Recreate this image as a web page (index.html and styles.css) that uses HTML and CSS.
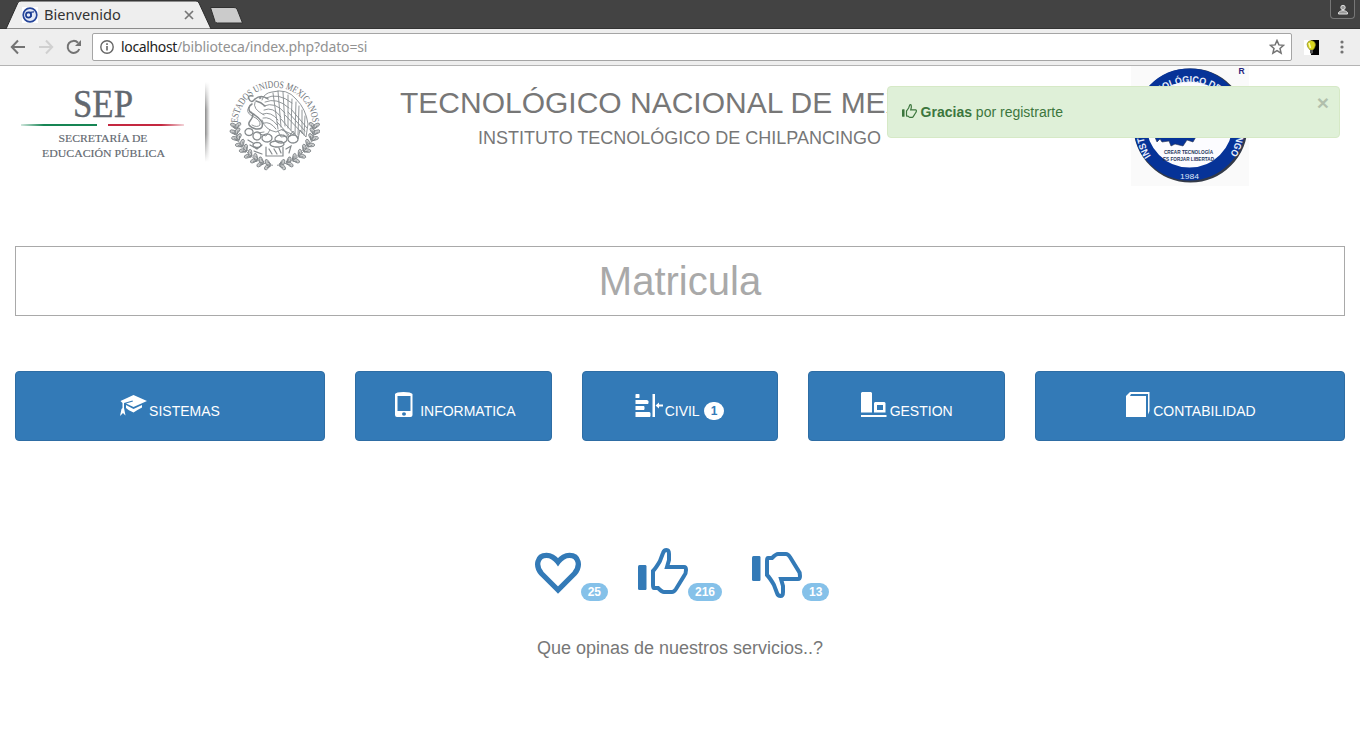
FILE: index.html
```html
<!DOCTYPE html>
<html lang="es">
<head>
<meta charset="utf-8">
<title>Bienvenido</title>
<link rel="stylesheet" href="styles.css">
</head>
<body>
<div class="tabstrip">
  <svg class="tab-shape" width="250" height="29" viewBox="0 0 250 29">
    <path d="M6 29 L18 2.500 Q19 1 21 1 H196 Q198 1 199 3 L211 29Z" fill="#eee" stroke="#2b2b2b"/>
    <path d="M210.500 7.500H234Q236 7.500 237 9L242.500 23H217.500Q215.500 23 215 21.500Z" fill="#cbcbcb" stroke="#303030"/>
  </svg>
  <div class="tab">
    <svg width="16" height="16" viewBox="0 0 16 16"><rect width="16" height="16" fill="#fff"/><circle cx="8" cy="8" r="6.800" fill="#e4e9f6" stroke="#25459a" stroke-width="1.700"/><circle cx="6.500" cy="8" r="2.600" fill="none" stroke="#183a91" stroke-width="1.600"/><path d="M6 5.500L12 4.800M9 5.500V10" stroke="#183a91" stroke-width="1.200"/></svg>
    <span class="tab-title">Bienvenido</span>
    <svg width="10" height="10" viewBox="0 0 10 10"><path d="M1 1L9 9M9 1L1 9" stroke="#777" stroke-width="1.700"/></svg>
  </div>
  <div class="profile"><svg width="12" height="12" viewBox="0 0 12 12"><circle cx="6" cy="3.500" r="2.200" fill="#999" stroke="#ddd"/><path d="M1.500 10V8.500Q3.500 6.500 6 6.500T10.500 8.500V10Z" fill="#999" stroke="#ddd"/></svg></div>
</div>
<div class="toolbar">
  <svg class="nav" width="84" height="36" viewBox="0 0 84 36" fill="none" stroke-width="2">
    <path d="M25 18H12M18 11.500L11.800 18L18 24.500" stroke="#737373"/>
    <path d="M39 18H52M46 11.500L52.200 18L46 24.500" stroke="#d0d0d0"/>
    <path d="M79.300 20A6 6 0 1 1 78 13.700" stroke="#737373"/><path d="M81 11V17H75Z" fill="#737373"/>
  </svg>
  <div class="omnibox">
    <svg width="14" height="14" viewBox="0 0 14 14"><circle cx="7" cy="7" r="6.200" fill="none" stroke="#666" stroke-width="1.400"/><path d="M7 6V10.500M7 3.300V5" stroke="#666" stroke-width="1.600"/></svg>
    <span class="url"><b>localhost</b>/biblioteca/index.php?dato=si</span>
    <svg class="star" width="16" height="16" viewBox="0 0 16 16"><path d="M8 1.500L9.900 5.900L14.600 6.300L11 9.400L12.100 14.100L8 11.600L3.900 14.100L5 9.400L1.400 6.300L6.100 5.900Z" fill="none" stroke="#737373" stroke-width="1.500"/></svg>
  </div>
  <svg class="bulb" width="15" height="15" viewBox="0 0 15 15"><path d="M0 0H7V15H0Z" fill="#fff"/><path d="M7 0H15V15H7Z" fill="#000"/><path d="M3 4Q4 .500 7.500.500Q11.500 1 11.500 5Q11 8 9 10H6Q3 7 3 4Z" fill="#d8d51e" stroke="#77751d" stroke-width=".6"/><path d="M5 3L6.500 8" stroke="#ffffb0" stroke-width="1.500"/><path d="M6 10H9V13L7.500 14L6 13Z" fill="#555"/></svg>
  <svg class="menu" width="4" height="14" viewBox="0 0 4 14" fill="#737373"><circle cx="2" cy="2" r="1.600"/><circle cx="2" cy="7" r="1.600"/><circle cx="2" cy="12" r="1.600"/></svg>
</div>

<div class="page">
  <header class="header">
    <svg class="gov" width="320" height="114" viewBox="0 66 320 114">
      <defs>
        <linearGradient id="green"><stop stop-color="#168554" stop-opacity=".2"/><stop offset=".3" stop-color="#168554"/></linearGradient>
        <linearGradient id="red"><stop offset=".7" stop-color="#c42840"/><stop offset="1" stop-color="#c42840" stop-opacity=".2"/></linearGradient>
        <linearGradient id="shade"><stop stop-color="#888"/><stop offset="1" stop-color="#fff"/></linearGradient>
        <linearGradient id="fade" x2="0" y2="1"><stop stop-color="#fff"/><stop offset=".35" stop-color="#fff" stop-opacity="0"/><stop offset=".65" stop-color="#fff" stop-opacity="0"/><stop offset="1" stop-color="#fff"/></linearGradient>
        <path id="motto" d="M237.500 125A37.500 37.500 0 0 1 312.500 125"/>
        <g id="leaf"><ellipse cx="-3" cy="-1" rx="3.800" ry="1.800" transform="rotate(35)"/><ellipse cx="3" cy="-1" rx="3.800" ry="1.800" transform="rotate(-35)"/><path d="M0-3V3M-3-3L-1 1M3-3L1 1"/></g>
      </defs>
      <g fill="#626870" stroke="#626870" font-family="Liberation Serif, serif">
        <text x="73" y="116.500" font-size="39" stroke-width=".4" textLength="60" lengthAdjust="spacingAndGlyphs">SEP</text>
        <text x="58.500" y="142" font-size="11.300" stroke-width=".15" textLength="89" lengthAdjust="spacingAndGlyphs">SECRETARÍA DE</text>
        <text x="42" y="157" font-size="11.300" stroke-width=".15" textLength="123" lengthAdjust="spacingAndGlyphs">EDUCACIÓN PÚBLICA</text>
      </g>
      <rect x="21" y="124" width="76" height="2" fill="url(#green)"/>
      <rect x="108" y="124" width="76" height="2" fill="url(#red)"/>
      <rect x="205" y="82" width="5" height="80" fill="url(#shade)"/><rect x="205" y="82" width="6" height="80" fill="url(#fade)"/>
      <text font-family="Liberation Serif, serif" font-size="10" fill="#6d7276"><textPath href="#motto" startOffset="2" textLength="113" lengthAdjust="spacingAndGlyphs">ESTADOS UNIDOS MEXICANOS</textPath></text>
      <g fill="none" stroke="#858a8d" stroke-width=".9" stroke-linecap="round">
        <path d="M262 100Q264 93 272 92Q287 88 296 99Q306 109 308 124L306 137L300 130L298 139L293 131L289 137L283 129L276 132Q265 130 262 120"/>
        <path d="M266 98Q278 92 292 103M265 102Q277 97 289 108M264 106Q275 101 285 113M264 110Q273 106 281 117M263 114Q271 111 278 120M263 118Q270 116 277 125M264 123Q270 121 276 129"/>
        <path d="M273 93L278 129M278 91L281 127M283 92L285 126M288 95L288 128M292 99L291 130M296 102L295 134M299 106L298 135M302 110L302 133M305 116L304 135"/>
        <path d="M285 115L303 134M288 112L305 131M291 109L307 128M281 119L294 134M277 122L289 135"/>
        <path stroke-width="1.500" d="M268 99Q261 94 255 99Q251 104 249 99Q247 95 253 96M256 101Q261 102 265 106"/>
        <circle cx="260" cy="98" r=".8"/>
        <path stroke-width="1.500" d="M252 104Q247 107 250 112Q258 116 262 122Q264 130 256 129Q246 126 250 121Q255 115 251 112"/>
        <path d="M249 107Q245 112 252 116Q261 120 260 125Q257 128 252 125M255 102Q252 109 264 115M270 130L266 136L260 134M278 131L281 137L288 136M264 132L258 133M282 130L294 135"/>
        <g stroke-width="1.300" stroke-dasharray="2 .8"><ellipse cx="249" cy="132" rx="4" ry="3.500"/><ellipse cx="257" cy="136" rx="4" ry="4"/><ellipse cx="267" cy="138" rx="5" ry="4"/><ellipse cx="281" cy="139" rx="6" ry="4"/><ellipse cx="293" cy="139" rx="5" ry="4"/><ellipse cx="277" cy="144" rx="7" ry="3"/><ellipse cx="257" cy="145" rx="4" ry="2.500"/></g>
        <path stroke-width="1.200" d="M266 147V156H283V147M269 149L272 154M274 149L277 154M279 148L281 153M248 140L253 143M250 145L257 149L262 145M286 149L291 146L289 153M254 151L262 154"/>
      </g>
      <g fill="#c9cbcc" stroke="#7c8185" stroke-width=".8">
        <use href="#leaf" transform="translate(236 128) rotate(-5)"/><use href="#leaf" transform="translate(236 134) rotate(-15)"/><use href="#leaf" transform="translate(238 140) rotate(-24)"/><use href="#leaf" transform="translate(242 146) rotate(-35)"/><use href="#leaf" transform="translate(246 151) rotate(-44)"/><use href="#leaf" transform="translate(251 156) rotate(-54)"/><use href="#leaf" transform="translate(257 160) rotate(-63)"/><use href="#leaf" transform="translate(263 163) rotate(-74)"/><use href="#leaf" transform="translate(270 165) rotate(-85)"/>
        <use href="#leaf" transform="translate(314 128) rotate(5)"/><use href="#leaf" transform="translate(314 134) rotate(15)"/><use href="#leaf" transform="translate(312 140) rotate(24)"/><use href="#leaf" transform="translate(308 146) rotate(35)"/><use href="#leaf" transform="translate(304 151) rotate(44)"/><use href="#leaf" transform="translate(299 156) rotate(54)"/><use href="#leaf" transform="translate(293 160) rotate(63)"/><use href="#leaf" transform="translate(287 163) rotate(74)"/><use href="#leaf" transform="translate(280 165) rotate(85)"/>
      </g>
    </svg>
    <div class="titles">
      <h2>TECNOLÓGICO NACIONAL DE MEXICO</h2>
      <h4>INSTITUTO TECNOLÓGICO DE CHILPANCINGO</h4>
    </div>
    <svg class="school" width="118" height="120" viewBox="1131 66 118 120">
      <defs><path id="ring" d="M1151 156A47 47 0 1 1 1229 156"/></defs>
      <rect x="1131" y="66" width="118" height="120" fill="#fafafa"/>
      <circle cx="1190.500" cy="125.500" r="50" fill="none" stroke="#333a48" stroke-width="14"/>
      <circle cx="1189.500" cy="124.500" r="49.500" fill="#fcfcff" stroke="#063398" stroke-width="13"/>
      <path d="M1154 135H1197L1193 142L1187 140L1183 146L1175 144L1171 146L1169 141L1162 142L1160 139L1157 142Z" fill="#063398" stroke="#26334f" stroke-width=".6"/>
      <g font-family="Liberation Sans, sans-serif" font-weight="bold">
        <g font-size="9.800" fill="#e9effc">
          <text><textPath href="#ring" startOffset="0" textLength="47" lengthAdjust="spacingAndGlyphs">INSTITUTO</textPath></text>
          <text><textPath href="#ring" startOffset="50" textLength="82" lengthAdjust="spacingAndGlyphs">TECNOLÓGICO DE</textPath></text>
          <text><textPath href="#ring" startOffset="135" textLength="66" lengthAdjust="spacingAndGlyphs">CHILPANCINGO</textPath></text>
        </g>
        <text x="1180" y="178.500" font-size="8" font-weight="400" fill="#dfe6f8" textLength="19" lengthAdjust="spacingAndGlyphs">1984</text>
        <g font-size="5.500" fill="#26365c"><text x="1164" y="154.300" textLength="49" lengthAdjust="spacingAndGlyphs">CREAR TECNOLOGÍA</text><text x="1163" y="160.800" textLength="51" lengthAdjust="spacingAndGlyphs">ES FORJAR LIBERTAD</text></g>
        <text x="1238.500" y="74" font-size="8.500" fill="#27247c">R</text>
      </g>
    </svg>
  </header>

  <div class="alert">
    <svg width="15" height="14" viewBox="0 0 50 46"><use href="#thumb"/></svg>
    <span><strong>Gracias</strong> por registrarte</span>
    <span class="close">×</span>
  </div>

  <input class="matricula" type="text" placeholder="Matricula">

  <div class="careers">
    <div class="col wide"><a class="btn"><svg class="icon" viewBox="0 0 28 28"><path d="M13.500 4L27 10L13.500 16L6 12.500L13 10.500L12.500 9.500L4 12V17L5.500 24.500L3 22L0 25L1.500 18L2.500 17V12L.500 10Z"/><path d="M6 14L13.500 18L22 14V16.500Q19 18 13.500 21.500Q8 19 6 17Z"/></svg>SISTEMAS</a></div>
    <div class="col"><a class="btn"><svg class="icon" viewBox="0 0 28 28"><path fill-rule="evenodd" d="M3 3Q4 1 11.500 1T20.500 3V24Q20.500 26 18.500 26H5Q3 26 3 24ZM5.500 5V20H18.500V5ZM10 23A2 1.800 0 1 0 14 23A2 1.800 0 1 0 10 23"/></svg>INFORMATICA</a></div>
    <div class="col"><a class="btn"><svg class="icon" viewBox="1 0 28 28"><path d="M-.500 3.500L0 3H3L3.500 3.500V6.500L3 7H-.500ZM-.500 9H11L12.500 10V12L12 13H-.500ZM-.500 15H8L8.500 16V18L8 19H-.500ZM-.500 21H13.500L14.500 22V25L14 26H-.500ZM16.500 3H19V26H16.500ZM19.500 14.500L23 11.500V13.500H27V15.500H23V17.500Z"/></svg>CIVIL<span class="count">1</span></a></div>
    <div class="col"><a class="btn"><svg class="icon" viewBox="1 0 28 28"><path fill-rule="evenodd" d="M0 2L1 1H10L11 2V21.500H0ZM13 12L14 11H23.500L24.500 12V21.500H13ZM16 14V19H22V14ZM0 24H25.500V26H0Z"/></svg>GESTION</a></div>
    <div class="col wide"><a class="btn"><svg class="icon" viewBox="-1 0 28 28"><path d="M0 5L4 1H23.500V20L22 23.500V3H5L4 5H20V26H0Z"/></svg>CONTABILIDAD</a></div>
  </div>

  <div class="ratings">
    <div class="rate"><svg width="50" height="46" viewBox="0 0 50 46"><path d="M27 42L10.500 25.500C4 18 6 7.300 15.500 7.300C21 7.300 24 10 27 14C30 10 33 7.300 38.500 7.300C48 7.300 50 18 43.500 25.500Z" fill="none" stroke="#337ab7" stroke-width="5.300"/></svg><span class="badge">25</span></div>
    <div class="rate"><svg width="50" height="46" viewBox="0 0 50 46"><g id="thumb"><path d="M1.500 17H7.500Q8.500 17 8.500 18.500V40.500Q8.500 42 7.500 42H1.500Q0 42 0 40.500V18.500Q0 17 1.500 17Z" fill="currentColor"/><path d="M15 23Q18 20 22 13L25 5Q26 2 28.500 2Q31 2 31 6V12L29 19H46Q48 19 48 22Q48 26 46 28L38 41Q36 44 34 44H26Q24 44 20 40H16Q15 40 15 37Z" fill="none" stroke="currentColor" stroke-width="4"/></g></svg><span class="badge">216</span></div>
    <div class="rate down"><svg width="50" height="46" viewBox="0 0 50 46"><use href="#thumb" transform="matrix(1 0 0 -1 0 46)"/></svg><span class="badge">13</span></div>
  </div>
  <p class="question">Que opinas de nuestros servicios..?</p>
</div>
</body>
</html>
```

FILE: styles.css
```css
* { box-sizing: border-box; }
body { margin: 0; height: 744px; overflow: hidden; background: #fff; font: 14px/20px "Liberation Sans", Arial, sans-serif; color: #777; }
svg { display: block; flex: none; }
.tabstrip { position: relative; height: 29px; background: #434343; border-bottom: 1px solid #333; display: flex; justify-content: space-between; }
.tab-shape { position: absolute; left: 0; top: 0; }
.tab { position: relative; display: flex; align-items: center; width: 194px; padding: 1px 0 0 22px; font: 14.6px/20px "Noto Sans", sans-serif; color: #333; }
.tab-title { flex: 1; padding-left: 6px; margin-top: -2px; }
.profile { width: 25px; height: 19px; margin-right: 5px; border: 1px solid #777; border-top: 0; border-radius: 0 0 4px 4px; background: #3d3d3d; display: flex; justify-content: center; padding-top: 4px; }
.toolbar { height: 37px; background: #eee; border-bottom: 1px solid #b4b4b4; display: flex; align-items: center; }
.omnibox { margin-left: 8px; width: 1200px; height: 28px; border: 1px solid #a5a5a5; border-radius: 2px; background: #fff; display: flex; align-items: center; padding: 0 6px 0 7px; }
.url { flex: 1; padding-left: 7px; font: 14px/20px "Noto Sans", sans-serif; color: #929292; letter-spacing: -.14px; }
.url b { font-weight: 400; color: #222; letter-spacing: -.35px; }
.bulb { margin-left: 12px; }
.menu { margin-left: 21px; }
.page { position: relative; padding: 0 15px; }
.header { display: flex; height: 120px; margin: 0 -15px; }
.titles { width: 719px; text-align: center; padding-top: 20px; }
.titles h2 { margin: 0; font-size: 30px; line-height: 33px; font-weight: 400; }
.titles h4 { margin: 9px 0 0; font-size: 18px; line-height: 20px; font-weight: 400; }
.school { margin-left: 92px; }
.alert { position: absolute; left: 887px; top: 20px; width: 453px; height: 52px; border: 1px solid #d6e9c6; border-radius: 4px; background: #dff0d8; color: #3c763d; display: flex; padding: 15px 10px 0 14px; }
.alert svg { margin: 2px 3.6px 0 0; }
.close { margin: -10px 0 0 auto; font-size: 21px; font-weight: 700; line-height: 21px; color: #000; opacity: .2; }
.matricula { display: block; width: 100%; height: 70px; margin: 60px 0 55px; padding: 0; border: 1px solid #a9a9a9; background: #fff; text-align: center; font: 40px "Liberation Sans", Arial, sans-serif; outline: 0; }
.matricula::placeholder { color: #a9a9a9; opacity: 1; }
.careers { display: flex; margin: 0 -15px; }
.col { width: 16.6667%; padding: 0 15px; }
.wide { width: 25%; }
.btn { display: flex; align-items: center; justify-content: center; height: 70px; padding: 10px 0 0 1px; border: 1px solid #2e6da4; border-radius: 4px; background: #337ab7; color: #fff; }
.icon { width: 28px; height: 28px; margin-bottom: 12px; fill: #fff; overflow: visible; }
.wide:first-child .icon { margin-right: 1px; margin-left: -1px; }
.count, .badge { border-radius: 10px; font-size: 12px; font-weight: 700; line-height: 18px; height: 18px; padding: 0 7px; }
.count { margin-left: 4px; background: #fff; color: #337ab7; }
.ratings { display: flex; justify-content: center; gap: 30px; margin-top: 107px; color: #337ab7; }
.rate { display: flex; }
.badge { margin-top: 35px; background: #85c1e9; color: #fff; }
.down svg { margin-top: 4px; }
.question { margin: 37px 0 0; font-size: 18px; line-height: 20px; text-align: center; }
```
